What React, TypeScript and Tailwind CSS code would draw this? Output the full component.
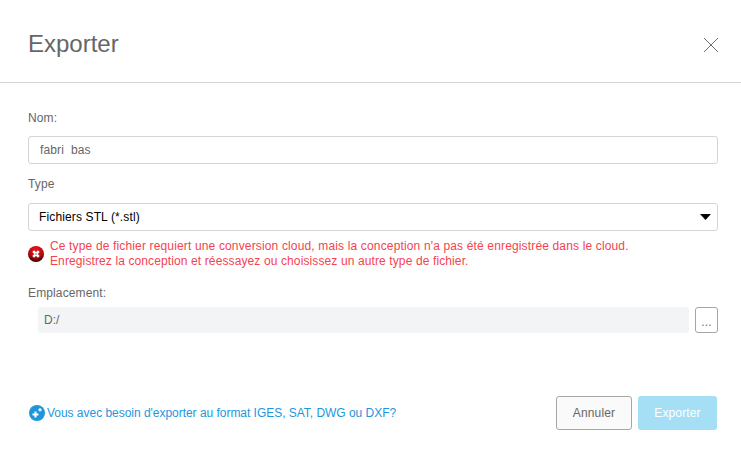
export default function App() {
  return (
    <div className="flex h-[462px] w-[741px] flex-col overflow-hidden bg-white font-['Liberation_Sans',Arial,sans-serif] text-xs tracking-[0.13px] text-[#666]">
      <header className="flex h-[83px] shrink-0 items-center justify-between border-b border-[#d4d4d4] pl-7 pr-[22px] pt-[6px]">
        <h1 className="text-2xl leading-7 tracking-normal text-[#666]">Exporter</h1>
        <svg width="16" height="16" viewBox="0 0 16 16" className="mt-[2px] text-[#6e6e6e]">
          <path d="M1 1 L15 15 M15 1 L1 15" stroke="currentColor" strokeWidth="1" fill="none" />
        </svg>
      </header>

      <main className="flex flex-col pl-7 pr-[23px] pt-7">
        <label className="leading-[14px]">Nom:</label>
        <input
          readOnly
          value="fabri  bas"
          className="mt-[11px] h-[28px] w-full rounded-[3px] border border-[#d4d4d4] px-[11px] text-xs text-[#666] outline-none"
        />
        <label className="mt-[13px] leading-[14px]">Type</label>
        <div className="mt-[12px] flex h-[28px] items-center justify-between rounded-[3px] border border-[#d4d4d4] pl-2.5 pr-1.5 text-xs text-black">
          <span>Fichiers STL (*.stl)</span>
          <svg width="11" height="6" viewBox="0 0 11 6">
            <path d="M0 0 H11 L5.5 6 Z" fill="#000" />
          </svg>
        </div>

        <div className="mt-[8px] flex items-center gap-[6px]">
          <ErrorIcon />
          <p className="text-xs leading-[15px] text-[#f4434f]">
            <span className="tracking-[0.15px]">
              Ce type de fichier requiert une conversion cloud, mais la conception n'a pas été enregistrée dans le cloud.
            </span>
            <br />
            <span className="tracking-[0.115px]">
              Enregistrez la conception et réessayez ou choisissez un autre type de fichier.
            </span>
          </p>
        </div>

        <label className="mt-[17px] leading-[14px]">Emplacement:</label>
        <div className="mt-[7px] flex gap-[6px] pl-2.5">
          <div className="flex h-[26px] flex-1 items-center rounded-[3px] bg-[#f3f4f6] pl-1.5 tracking-normal">D:/</div>
          <button className="flex h-[26px] w-[23px] items-center justify-center rounded-[3px] border border-[#a6a6a6] bg-white pt-1 text-xs text-[#666]">
            ...
          </button>
        </div>
      </main>

      <footer className="mt-[63px] flex items-center justify-between pl-[29px] pr-6">
        <a className="flex items-center gap-[2px] text-xs tracking-[-0.03px] text-[#1e96dc]">
          <InfoIcon />
          Vous avec besoin d'exporter au format IGES, SAT, DWG ou DXF?
        </a>
        <div className="flex gap-[6px]">
          <button className="h-[34px] w-[76px] rounded-[3px] border border-[#a6a6a6] bg-[#fafafa] text-xs text-[#666]">
            Annuler
          </button>
          <button className="h-[34px] w-[79px] rounded-[3px] bg-[#a5dff6] text-xs text-white">Exporter</button>
        </div>
      </footer>
    </div>
  );
}

function ErrorIcon() {
  return (
    <svg width="16" height="16" viewBox="0 0 16 16" className="shrink-0">
      <defs>
        <radialGradient id="err" cx="50%" cy="25%" r="75%">
          <stop offset="0%" stopColor="#e8141c" />
          <stop offset="60%" stopColor="#b80b11" />
          <stop offset="100%" stopColor="#2a0304" />
        </radialGradient>
      </defs>
      <circle cx="8" cy="8" r="8" fill="url(#err)" />
      <path d="M5.2 5.2 L10.8 10.8 M10.8 5.2 L5.2 10.8" stroke="#fff" strokeWidth="2.6" />
      <circle cx="8" cy="8" r="0.9" fill="#a0a0a0" />
    </svg>
  );
}

function InfoIcon() {
  return (
    <svg width="16" height="16" viewBox="0 0 16 16" className="shrink-0">
      <circle cx="8" cy="8" r="8" fill="#1e96dc" />
      <path d="M6.5 6.5 V12.5 M3.5 9.5 H9.5" stroke="#fff" strokeWidth="2" />
      <path d="M11 3 V6.6 M9.2 4.8 H12.8" stroke="#fff" strokeWidth="1.3" />
    </svg>
  );
}
